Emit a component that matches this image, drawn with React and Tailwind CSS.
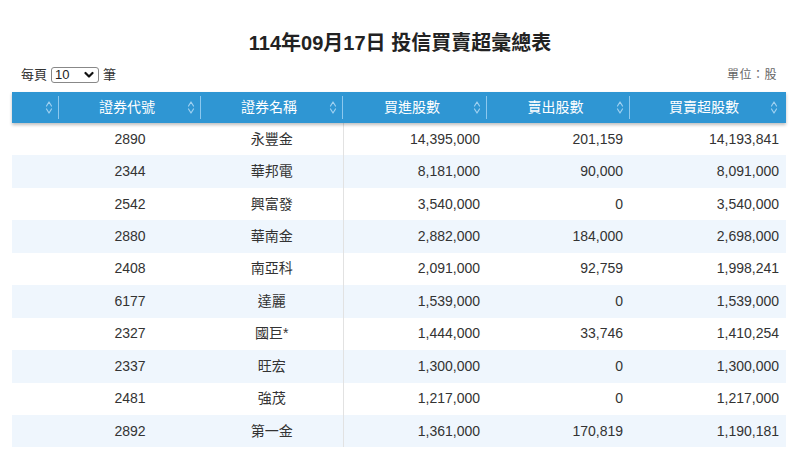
import React from "react";

const rows = [
  ["2890", "永豐金", "14,395,000", "201,159", "14,193,841"],
  ["2344", "華邦電", "8,181,000", "90,000", "8,091,000"],
  ["2542", "興富發", "3,540,000", "0", "3,540,000"],
  ["2880", "華南金", "2,882,000", "184,000", "2,698,000"],
  ["2408", "南亞科", "2,091,000", "92,759", "1,998,241"],
  ["6177", "達麗", "1,539,000", "0", "1,539,000"],
  ["2327", "國巨*", "1,444,000", "33,746", "1,410,254"],
  ["2337", "旺宏", "1,300,000", "0", "1,300,000"],
  ["2481", "強茂", "1,217,000", "0", "1,217,000"],
  ["2892", "第一金", "1,361,000", "170,819", "1,190,181"],
];

const columns = [
  { label: "", width: "w-[47px]" },
  { label: "證券代號", width: "w-[142px]" },
  { label: "證券名稱", width: "w-[142px]" },
  { label: "買進股數", width: "w-[144px]" },
  { label: "賣出股數", width: "w-[143px]" },
  { label: "買賣超股數", width: "w-[156px]" },
];

function SortIcon() {
  return (
    <svg width="8" height="15" viewBox="0 0 8 15" fill="none" stroke="#9fd0f0" strokeWidth="1.2" strokeLinecap="round" strokeLinejoin="round">
      <path d="M1.5 6 L4 2 L6.5 6" />
      <path d="M1.5 9 L4 13 L6.5 9" />
    </svg>
  );
}

function App() {
  return (
    <div
      className="w-[800px] h-[459px] bg-white text-[#333] overflow-hidden"
      style={{ fontFamily: '"Liberation Sans", Arial, "Noto Sans CJK TC", sans-serif' }}
    >
      <h1 className="pt-[31px] h-[58px] text-center text-[20px] font-bold text-[#222] leading-[24px]">
        114年09月17日 投信買賣超彙總表
      </h1>

      <div className="flex justify-between items-center px-[21px] pr-[23px] h-[34px] text-[13px]">
        <div className="flex items-center gap-[4px] text-[#333]">
          <span>每頁</span>
          <span className="relative inline-flex">
            <select
              defaultValue="10"
              className="appearance-none w-[48px] h-[16px] border border-[#888] rounded-[3px] pl-[3px] text-[13px] leading-[14px] text-[#222]"
            >
              <option value="10">10</option>
              <option value="20">20</option>
              <option value="50">50</option>
            </select>
            <svg className="absolute right-[5px] top-[4px] pointer-events-none" width="10" height="8" viewBox="0 0 10 8" fill="none" stroke="#111" strokeWidth="2.2" strokeLinecap="round" strokeLinejoin="round">
              <path d="M1.5 2 L5 5.5 L8.5 2" />
            </svg>
          </span>
          <span>筆</span>
        </div>
        <div className="text-[#666] text-[12px] tracking-[0.5px]">單位：股</div>
      </div>

      <table className="ml-[12px] w-[774px] table-fixed border-collapse text-[14px]">
        <thead>
          <tr className="bg-[#2f96d3] text-white h-[31px] shadow-[0_2px_3px_rgba(0,0,0,0.25)] relative">
            {columns.map((c, i) => (
              <th key={i} className={`${c.width} p-0 font-normal`}>
                <div className="flex items-center h-[31px]">
                  <span className="flex-1 text-center pl-[8px]">{c.label}</span>
                  <span className="flex items-center pr-[5px]">
                    <SortIcon />
                  </span>
                  {i < columns.length - 1 ? (
                    <span className="w-px h-[23px] bg-[#8cc8ee]" />
                  ) : (
                    <span className="w-[3px]" />
                  )}
                </div>
              </th>
            ))}
          </tr>
        </thead>
        <tbody>
          {rows.map((r, i) => (
            <tr key={r[0]} className={`h-[32.44px] ${i % 2 === 1 ? "bg-[#eff6fd]" : "bg-white"}`}>
              <td className="p-0"></td>
              <td className="p-0 text-center">{r[0]}</td>
              <td className="p-0 text-center border-r border-[#e2e2e2]">{r[1]}</td>
              <td className="p-0 text-right pr-[7px]">{r[2]}</td>
              <td className="p-0 text-right pr-[7px]">{r[3]}</td>
              <td className="p-0 text-right pr-[7px]">{r[4]}</td>
            </tr>
          ))}
        </tbody>
      </table>
    </div>
  );
}

export default App;
